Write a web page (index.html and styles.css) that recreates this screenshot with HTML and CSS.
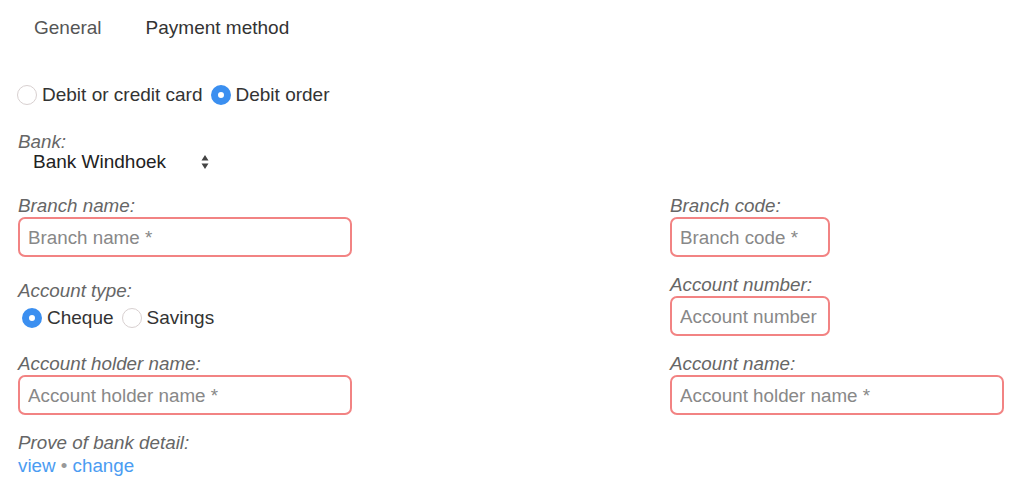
FILE: index.html
```html
<!DOCTYPE html>
<html>
<head lang="en">
    <meta charset="UTF-8">
    <title>Payment method</title>
    <link rel="stylesheet" href="styles.css">
</head>
<body>

<div class="tabs">
    <span class="tab">General</span>
    <span class="tab active">Payment method</span>
</div>

<div class="radios pay-type">
    <label class="opt"><input type="radio" name="pay"> Debit or credit card</label>
    <label class="opt"><input type="radio" name="pay" checked> Debit order</label>
</div>

<div class="field bank">
    <div class="lbl">Bank:</div>
    <div class="select">
        <span>Bank Windhoek</span>
        <svg width="8" height="16" viewBox="0 0 8 16"><path d="M4 1 L7.5 6.5 L0.5 6.5 Z M4 15 L7.5 9.5 L0.5 9.5 Z" fill="#444"/></svg>
    </div>
</div>

<div class="fields">
    <div class="field">
        <div class="lbl">Branch name:</div>
        <input class="txt wide" placeholder="Branch name *">
    </div>
    <div class="field">
        <div class="lbl">Branch code:</div>
        <input class="txt short" placeholder="Branch code *">
    </div>

    <div class="field acc-type">
        <div class="lbl">Account type:</div>
        <div class="radios">
            <label class="opt"><input type="radio" name="acc" checked> Cheque</label>
            <label class="opt"><input type="radio" name="acc"> Savings</label>
        </div>
    </div>
    <div class="field">
        <div class="lbl">Account number:</div>
        <input class="txt short" placeholder="Account number">
    </div>

    <div class="field">
        <div class="lbl">Account holder name:</div>
        <input class="txt wide" placeholder="Account holder name *">
    </div>
    <div class="field">
        <div class="lbl">Account name:</div>
        <input class="txt wide" placeholder="Account holder name *">
    </div>

    <div class="field">
        <div class="lbl">Prove of bank detail:</div>
        <div class="links"><a href="#">view</a> <span class="dot">&bull;</span> <a href="#">change</a></div>
    </div>
</div>

</body>
</html>
```

FILE: styles.css
```css
* {
    padding: 0;
    margin: 0;
    box-sizing: border-box;
}
body {
    padding: 0 18px;
    font-family: "Liberation Sans", Arial, sans-serif;
    color: #333;
    background: #fff;
}
.tabs {
    display: flex;
    gap: 44px;
    padding: 17px 0 0 16px;
    font-size: 19px;
    line-height: 22px;
}
.tab {
    color: #555;
}
.tab.active {
    color: #333;
}
.radios {
    display: flex;
    align-items: center;
    font-size: 19px;
    line-height: 22px;
}
.pay-type {
    margin: 45px 0 0 -1px;
}
.opt {
    display: flex;
    align-items: center;
    gap: 5px;
    margin-right: 8px;
}
.opt input {
    -webkit-appearance: none;
    appearance: none;
    width: 20px;
    height: 20px;
    border: 1px solid #d8d0d0;
    border-radius: 50%;
    background: #fff;
}
.opt input:checked {
    border: 7px solid #3b8ff0;
    background: #fff;
}
.lbl {
    font-size: 18.8px;
    line-height: 20px;
    font-style: italic;
    color: #666;
}
.bank {
    margin-top: 26px;
}
.select {
    display: flex;
    align-items: center;
    width: 191px;
    justify-content: space-between;
    padding-left: 15px;
    font-size: 19px;
    line-height: 20px;
    color: #222;
}
.fields {
    display: grid;
    grid-template-columns: 652px 1fr;
    row-gap: 18px;
    margin-top: 24px;
}
.field .txt {
    margin-top: 1px;
}
.txt {
    display: block;
    height: 40px;
    border: 2px solid #f28383;
    border-radius: 7px;
    padding: 1px 8px 0;
    font-family: "Liberation Sans", Arial, sans-serif;
    font-size: 18.8px;
    color: #333;
    outline: none;
}
.txt::placeholder {
    color: #888;
}
.wide {
    width: 334px;
}
.short {
    width: 160px;
}
.acc-type {
    padding-top: 6px;
}
.acc-type .radios {
    margin: 6px 0 0 4px;
}
.links {
    margin-top: 3px;
    font-size: 18.8px;
    line-height: 20px;
}
.links a {
    color: #4b9cf2;
    text-decoration: none;
}
.dot {
    color: #999;
}
```
